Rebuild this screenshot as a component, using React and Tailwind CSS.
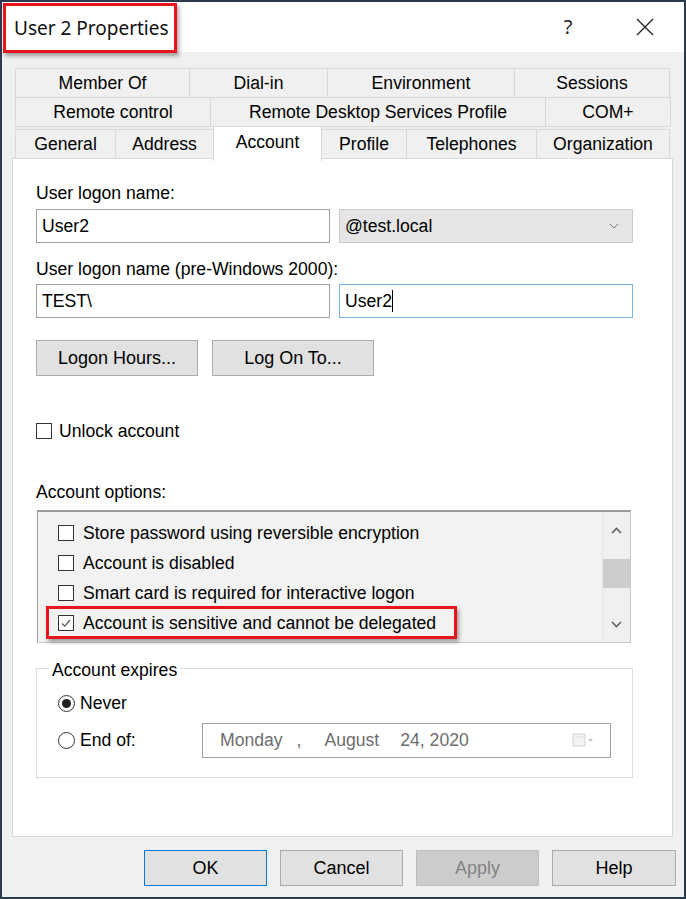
const sans = { fontFamily: '"Liberation Sans", Arial, sans-serif' };

const Checkbox = ({ checked }) => (
  <div className="w-[16px] h-[16px] border border-[#333333] bg-white flex items-center justify-center shrink-0">
    {checked && (
      <svg width="12" height="12" viewBox="0 0 12 12">
        <path d="M2 6.5 L4.8 9.2 L10 3" fill="none" stroke="#555555" strokeWidth="1.2" />
      </svg>
    )}
  </div>
);

const Radio = ({ checked }) => (
  <div className="w-[17px] h-[17px] rounded-full border border-[#333333] bg-white flex items-center justify-center shrink-0">
    {checked && <div className="w-[9px] h-[9px] rounded-full bg-[#222222]" />}
  </div>
);

const Tab = ({ w, children }) => (
  <div
    className={`${w} h-[30px] -mr-px border border-[#d9d9d9] bg-[#f0f0f0] flex items-center justify-center text-[17.6px] text-black`}
  >
    {children}
  </div>
);

const Chevron = ({ up }) => (
  <svg width="11" height="7" viewBox="0 0 11 7">
    <path
      d={up ? 'M1 6 L5.5 1.5 L10 6' : 'M1 1 L5.5 5.5 L10 1'}
      fill="none"
      stroke="#606060"
      strokeWidth="1.6"
    />
  </svg>
);

const Button = ({ w, variant, children }) => {
  const styles = {
    default: 'bg-[#e1e1e1] border-[#adadad] text-black',
    primary: 'bg-[#e1e1e1] border-[#0078d7] text-black',
    disabled: 'bg-[#cccccc] border-[#bfbfbf] text-[#838383]',
  };
  return (
    <div
      className={`${w} h-[36px] border ${styles[variant || 'default']} flex items-center justify-center text-[18px]`}
    >
      {children}
    </div>
  );
};

export default function App() {
  const options = [
    { label: 'Store password using reversible encryption', checked: false },
    { label: 'Account is disabled', checked: false },
    { label: 'Smart card is required for interactive logon', checked: false },
    { label: 'Account is sensitive and cannot be delegated', checked: true },
  ];

  return (
    <div
      className="w-[686px] h-[899px] border-2 border-[#2b3a4c] bg-[#f0f0f0] flex flex-col relative overflow-hidden"
      style={sans}
    >
      {/* title bar */}
      <div className="h-[50px] bg-white flex items-center relative">
        <div
          className="pl-[12px] pt-[2px] text-[19px] text-[#111111]"
          style={{ fontFamily: '"Noto Sans", "Open Sans", sans-serif' }}
        >
          User 2 Properties
        </div>
        <div className="ml-auto flex items-center">
          <span className="text-[20px] text-[#222222] w-[20px] text-center" style={{ fontFamily: '"Noto Sans", sans-serif' }}>
            ?
          </span>
          <svg className="ml-[58px] mr-[30px]" width="18" height="18" viewBox="0 0 18 18">
            <path d="M1 1 L17 17 M17 1 L1 17" stroke="#222222" strokeWidth="1.3" />
          </svg>
        </div>
        {/* annotation */}
        <div className="absolute left-[1px] top-[1px] w-[174px] h-[50px] border-[3px] border-[#e8141c] shadow-[2px_3px_4px_rgba(0,0,0,0.35)]" />
      </div>

      {/* tabs */}
      <div className="ml-[13px] mt-[16px] w-[655px] flex flex-col">
        <div className="flex">
          <Tab w="w-[175px]">Member Of</Tab>
          <Tab w="w-[139px]">Dial-in</Tab>
          <Tab w="w-[188px]">Environment</Tab>
          <Tab w="w-[156px]">Sessions</Tab>
        </div>
        <div className="flex -mt-px">
          <Tab w="w-[196px]">Remote control</Tab>
          <Tab w="w-[336px]">Remote Desktop Services Profile</Tab>
          <Tab w="w-[126px]">COM+</Tab>
        </div>
        <div className="flex -mt-px items-end relative z-10">
          <Tab w="w-[101px]">General</Tab>
          <Tab w="w-[99px]">Address</Tab>
          <div className="w-[109px] h-[35px] -mr-px -mb-[2px] border border-b-0 border-[#d9d9d9] bg-white flex items-start pt-[2px] justify-center text-[17.6px]">
            Account
          </div>
          <Tab w="w-[86px]">Profile</Tab>
          <Tab w="w-[131px]">Telephones</Tab>
          <Tab w="w-[134px]">Organization</Tab>
        </div>
      </div>

      {/* panel */}
      <div className="ml-[10px] -mt-px w-[661px] h-[679px] bg-white border border-[#d9d9d9] pl-[23px] pt-[24px] text-[17.6px] text-black">
        <div className="leading-[20px]">User logon name:</div>
        <div className="flex gap-[9px] mt-[6px]">
          <div className="w-[294px] h-[34px] border border-[#a0a0a0] flex items-center px-[5px]">User2</div>
          <div className="w-[294px] h-[34px] border border-[#cccccc] bg-[#e5e5e5] flex items-center px-[5px]">
            <span>@test.local</span>
            <svg className="ml-auto mr-[8px]" width="10" height="6" viewBox="0 0 10 6">
              <path d="M1 1 L5 5 L9 1" fill="none" stroke="#777777" strokeWidth="1" />
            </svg>
          </div>
        </div>
        <div className="leading-[20px] mt-[16px]">User logon name (pre-Windows 2000):</div>
        <div className="flex gap-[9px] mt-[5px]">
          <div className="w-[294px] h-[34px] border border-[#a0a0a0] flex items-center px-[5px]">TEST\</div>
          <div className="w-[294px] h-[34px] border border-[#7ab4ea] flex items-center px-[5px]">
            User2<span className="w-px h-[22px] bg-black" />
          </div>
        </div>
        <div className="flex gap-[14px] mt-[22px]">
          <Button w="w-[162px]">Logon Hours...</Button>
          <Button w="w-[162px]">Log On To...</Button>
        </div>

        <div className="flex items-center gap-[7px] mt-[45px] leading-[20px]">
          <Checkbox />
          <span>Unlock account</span>
        </div>

        <div className="leading-[20px] mt-[41px]">Account options:</div>
        <div className="relative mt-[8px] ml-px w-[594px] h-[133px] border border-[#c8c8c8] border-t-[2px] border-t-[#9a9a9a] border-l-[#a0a0a0] bg-[#f2f2f2] flex">
          <div className="flex-1 pl-[20px] pt-[6px] flex flex-col">
            {options.map((o) => (
              <div key={o.label} className="h-[30px] flex items-center gap-[9px]">
                <Checkbox checked={o.checked} />
                <span>{o.label}</span>
              </div>
            ))}
          </div>
          <div className="w-[28px] border-l border-[#e6e6e6] bg-[#f0f0f0] flex flex-col items-center">
            <div className="h-[34px] flex items-center pt-[2px]">
              <Chevron up />
            </div>
            <div className="w-[27px] h-[29px] mt-[13px] bg-[#cdcdcd]" />
            <div className="mt-auto h-[30px] flex items-start pt-[9px]">
              <Chevron />
            </div>
          </div>
          {/* annotation */}
          <div className="absolute left-[8px] top-[94px] w-[411px] h-[33px] border-[3px] border-[#e8141c] shadow-[2px_3px_4px_rgba(0,0,0,0.35)]" />
        </div>

        <div className="relative mt-[25px] w-[597px] h-[110px] border border-[#dcdcdc] pl-[21px] pt-[22px]">
          <div className="absolute left-[12px] -top-[9px] bg-white px-[3px] leading-[20px]">Account expires</div>
          <div className="flex items-center gap-[5px] h-[24px]">
            <Radio checked />
            <span>Never</span>
          </div>
          <div className="flex items-center mt-[13px] h-[24px]">
            <Radio />
            <span className="ml-[5px] w-[122px]">End of:</span>
            <div className="w-[409px] h-[35px] border border-[#a0a0a0] bg-white flex items-center pl-[17px] text-[#6d6d6d]">
              <span>Monday</span>
              <span className="ml-[14px]">,</span>
              <span className="ml-[23px]">August</span>
              <span className="ml-[21px]">24, 2020</span>
              <svg className="ml-auto mr-[16px]" width="22" height="14" viewBox="0 0 22 14">
                <rect x="1" y="1" width="12" height="12" fill="#f3f3f3" stroke="#cfcfcf" />
                <path d="M3 4 H11" stroke="#d8d8d8" />
                <path d="M16 6 L18.5 8.5 L21 6 Z" fill="#b8b8b8" />
              </svg>
            </div>
          </div>
        </div>
      </div>

      {/* footer buttons */}
      <div className="flex gap-[13px] ml-[142px] mt-[13px]">
        <Button w="w-[123px]" variant="primary">OK</Button>
        <Button w="w-[123px]">Cancel</Button>
        <Button w="w-[123px]" variant="disabled">Apply</Button>
        <Button w="w-[124px]">Help</Button>
      </div>
    </div>
  );
}
